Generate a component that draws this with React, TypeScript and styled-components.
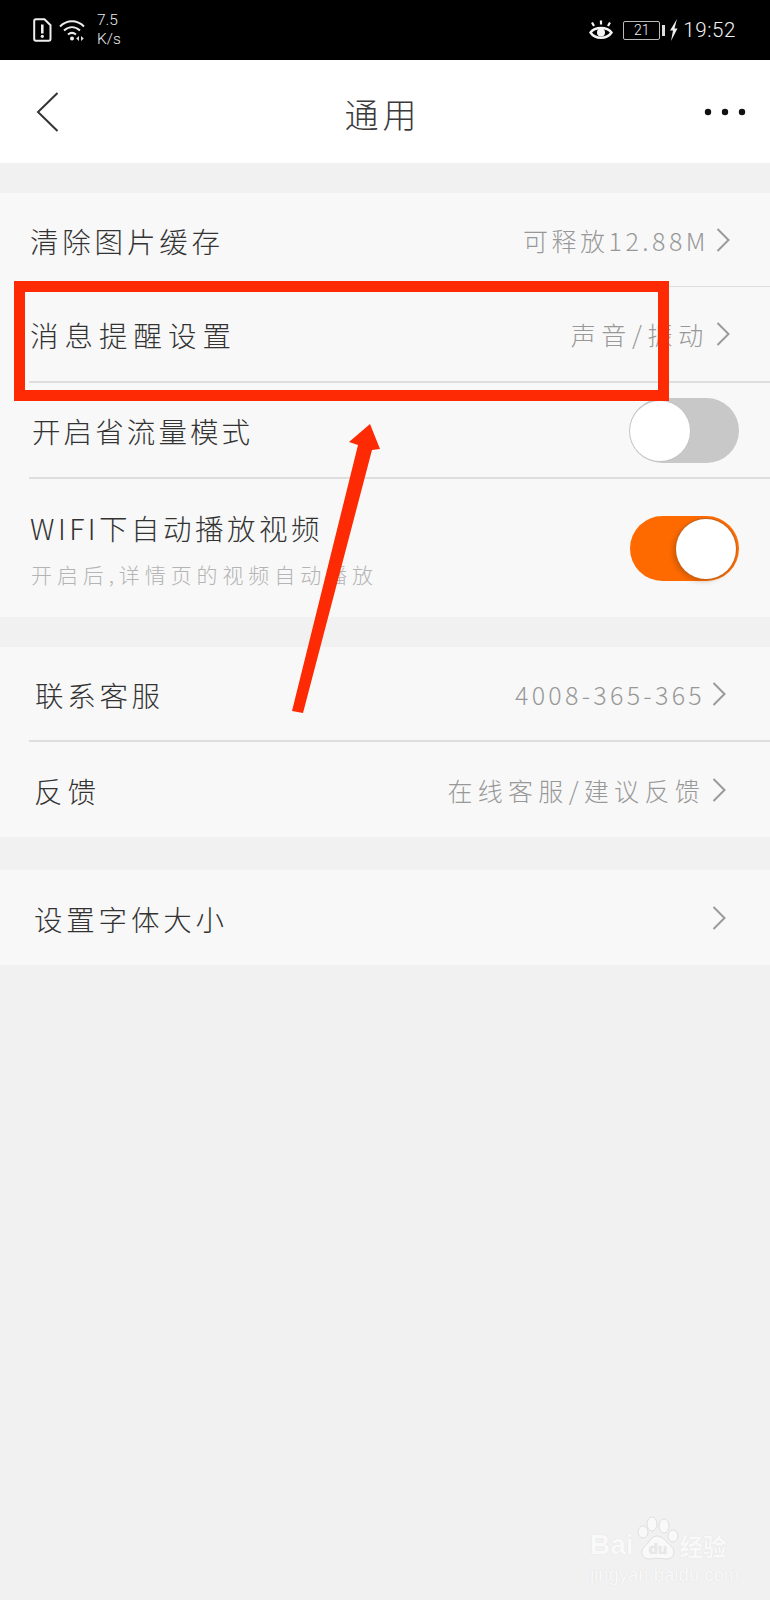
import React from "react";
import styled, { createGlobalStyle } from "styled-components";

const Global = createGlobalStyle`
  html, body { margin: 0; padding: 0; background: #f1f1f1; }
  * { box-sizing: border-box; }
`;

const CJK = `"Noto Sans CJK SC", "Noto Sans", sans-serif`;

const Page = styled.div`
  position: relative;
  width: 770px;
  height: 1600px;
  overflow: hidden;
  background: #f1f1f1;
  font-family: ${CJK};
`;

const StatusBar = styled.header`
  height: 60px;
  background: #000;
  color: #f2f2f2;
  display: flex;
  align-items: center;
  justify-content: space-between;
  padding: 0 34px 0 33px;
  font-family: Roboto, "Liberation Sans", sans-serif;
`;

const StatusGroup = styled.div`
  display: flex;
  align-items: center;
`;

const Speed = styled.div`
  margin-left: 9px;
  font-size: 15.5px;
  font-weight: 300;
  line-height: 19px;
  color: #ececec;
`;

const BatteryBox = styled.div`
  width: 37px;
  height: 19px;
  margin-left: 10px;
  border: 1px solid #bbb;
  border-radius: 2px;
  font-size: 14px;
  font-weight: 300;
  line-height: 16px;
  text-align: center;
`;

const BatteryTip = styled.div`
  width: 3px;
  height: 11px;
  margin-left: 2px;
  background: #ddd;
`;

const Clock = styled.div`
  margin-left: 5px;
  font-size: 20.5px;
  font-weight: 300;
  letter-spacing: 0.6px;
`;

const NavBar = styled.nav`
  height: 103px;
  background: #fff;
  display: flex;
  align-items: center;
  justify-content: space-between;
  padding: 0 24px 0 36px;
`;

const NavTitle = styled.h1`
  margin: 0 0 0 2px;
  padding-top: 4px;
  font-size: 34px;
  font-weight: 300;
  letter-spacing: 4px;
  color: #3a3a3a;
`;

const Group = styled.section<{ $top: number }>`
  margin-top: ${(p) => p.$top}px;
  background: #f8f8f8;
`;

const Row = styled.div<{ $height: number; $rule?: number }>`
  height: ${(p) => p.$height}px;
  margin-left: 29px;
  padding-right: 40px;
  display: flex;
  align-items: center;
  justify-content: space-between;
  border-bottom: ${(p) => (p.$rule ? `${p.$rule}px solid #dedede` : "none")};
`;

const SwitchRow = styled(Row)`
  padding-right: 31px;
`;

const Label = styled.div<{ $inset?: number; $spacing?: number }>`
  padding-left: ${(p) => p.$inset ?? 1}px;
  padding-top: 2px;
  font-size: 28.5px;
  font-weight: 300;
  line-height: 36px;
  letter-spacing: ${(p) => p.$spacing ?? 3.8}px;
  color: #333;
`;

const Sub = styled.div`
  padding-left: 2px;
  margin-top: 14px;
  font-size: 21px;
  font-weight: 300;
  line-height: 28px;
  letter-spacing: 4.9px;
  color: #b4b4b4;
`;

const Trailing = styled.div<{ $shift?: number }>`
  display: flex;
  align-items: center;
  margin-right: ${(p) => p.$shift ?? 0}px;
`;

const Value = styled.div<{ $spacing?: number }>`
  font-size: 25px;
  font-weight: 300;
  line-height: 34px;
  letter-spacing: ${(p) => p.$spacing ?? 3.5}px;
  color: #989898;
`;

const ChevronSlot = styled.svg`
  display: block;
  margin-left: 7px;
  flex: none;
`;

const Track = styled.div<{ $on?: boolean }>`
  position: relative;
  width: 109px;
  height: 65px;
  border-radius: 33px;
  background: ${(p) => (p.$on ? "#ff6a00" : "#c8c8c8")};
`;

const Knob = styled.div<{ $on?: boolean }>`
  position: absolute;
  top: 3px;
  left: ${(p) => (p.$on ? "46px" : "0")};
  width: 60px;
  height: 60px;
  border-radius: 50%;
  background: #fff;
  box-shadow: ${(p) =>
    p.$on ? "0 0 0 1px #c7641c, -3px 2px 5px rgba(120,60,0,.35)" : "0 0 0 1px #c4c4c4"};
`;

const Highlight = styled.div`
  position: absolute;
  left: 14px;
  top: 281px;
  width: 655px;
  height: 120px;
  border: 11px solid #fe2a03;
`;

const ArrowArt = styled.svg`
  position: absolute;
  left: 0;
  top: 0;
  pointer-events: none;
`;

const Watermark = styled.div`
  position: absolute;
  left: 590px;
  top: 1516px;
  width: 142px;
  color: #f9f9f9;
  text-shadow: 0 0 1px #d8d8d8;
`;

const MarkLine = styled.div`
  display: flex;
  align-items: flex-end;
  height: 46px;
`;

const MarkBrand = styled.span`
  font-family: "Liberation Sans", sans-serif;
  font-size: 28px;
  font-weight: 700;
  line-height: 34px;
`;

const MarkCn = styled.span`
  margin-left: 0;
  font-size: 23.5px;
  font-weight: 700;
  line-height: 32px;
`;

const MarkUrl = styled.div`
  font-family: "Liberation Sans", sans-serif;
  font-size: 18.5px;
  line-height: 22px;
  margin-top: 2px;
  white-space: nowrap;
`;

const Chevron = () => (
  <ChevronSlot width="14" height="24" viewBox="0 0 14 24" fill="none">
    <path d="M1.5 1 L12.5 12 L1.5 23" stroke="#9a9a9a" strokeWidth="2" />
  </ChevronSlot>
);

const Sim = () => (
  <svg width="19" height="24" viewBox="0 0 19 24" fill="none">
    <path d="M3 1.2h8.5l6 6V21a1.8 1.8 0 0 1-1.8 1.8H3A1.8 1.8 0 0 1 1.2 21V3A1.8 1.8 0 0 1 3 1.2z" stroke="#eee" strokeWidth="2" />
    <path d="M9.3 6.5v9" stroke="#eee" strokeWidth="2.6" />
    <circle cx="9.3" cy="18.3" r="1.6" fill="#eee" />
  </svg>
);

const Wifi = () => (
  <svg width="30" height="24" viewBox="0 0 28 24" fill="none" style={{ marginLeft: 6 }}>
    <path d="M1 8.5C8 1.5 18 1.5 25 8.5" stroke="#eee" strokeWidth="2" />
    <path d="M5 12.5C10 8 16 8 21 12.5" stroke="#eee" strokeWidth="2" />
    <path d="M9 16.5C11.5 14.5 14.5 14.5 17 16.5" stroke="#eee" strokeWidth="2" />
    <circle cx="13" cy="20.5" r="2" fill="#eee" />
    <path d="M20 18l-2.8 2.5 2.8 2.5zM22 18l2.8 2.5L22 23z" fill="#ddd" />
  </svg>
);

const Eye = () => (
  <svg width="24" height="21" viewBox="0 0 24 21" fill="none">
    <path d="M1.5 12.5C6 6.5 18 6.5 22.5 12.5C18 19.5 6 19.5 1.5 12.5z" stroke="#f4f4f4" strokeWidth="2.4" />
    <circle cx="12" cy="12.5" r="4" fill="#f4f4f4" />
    <path d="M5 6L3 2.5M12 4.5V.5M19 6l2-3.5" stroke="#f4f4f4" strokeWidth="2.2" />
  </svg>
);

const Bolt = () => (
  <svg width="9" height="22" viewBox="0 0 9 22" style={{ marginLeft: 4 }}>
    <path d="M8 0L1 11.5h3L2 22l6.5-12.5h-3z" fill="#eee" />
  </svg>
);

const Back = () => (
  <svg width="23" height="40" viewBox="0 0 23 40" fill="none">
    <path d="M21.5 1 L2 20 L21.5 39" stroke="#333" strokeWidth="2" />
  </svg>
);

const Dots = () => (
  <svg width="42" height="8" viewBox="0 0 42 8">
    <circle cx="4" cy="4" r="3.2" fill="#111" />
    <circle cx="21" cy="4" r="3.2" fill="#111" />
    <circle cx="38" cy="4" r="3.2" fill="#111" />
  </svg>
);

const Paw = () => (
  <svg width="42" height="46" viewBox="0 0 42 46" style={{ display: "block", flex: "none", margin: "0 1px 0 3px" }}>
    <g fill="#f9f9f9" stroke="#d8d8d8" strokeWidth="0.8">
      <ellipse cx="6" cy="16" rx="5" ry="6" />
      <ellipse cx="15" cy="8" rx="5" ry="7" />
      <ellipse cx="27" cy="10" rx="5" ry="7" />
      <ellipse cx="36" cy="20" rx="5" ry="6" />
      <path d="M20 20c6 0 9 6 14 10 6 6 2 14-6 13-4-1-10-1-15 0-8 1-11-8-5-13 5-4 6-10 12-10z" />
    </g>
    <text x="21" y="38" textAnchor="middle" fontFamily="Liberation Sans" fontSize="15" fontWeight="700" fill="#e8e8e8">du</text>
  </svg>
);

export default function App() {
  return (
    <Page>
      <Global />
      <StatusBar>
        <StatusGroup>
          <Sim />
          <Wifi />
          <Speed>7.5<br />K/s</Speed>
        </StatusGroup>
        <StatusGroup>
          <Eye />
          <BatteryBox>21</BatteryBox>
          <BatteryTip />
          <Bolt />
          <Clock>19:52</Clock>
        </StatusGroup>
      </StatusBar>
      <NavBar>
        <Back />
        <NavTitle>通用</NavTitle>
        <Dots />
      </NavBar>

      <Group $top={30}>
        <Row $height={94} $rule={1}>
          <Label $spacing={3.8}>清除图片缓存</Label>
          <Trailing>
            <Value>可释放12.88M</Value>
            <Chevron />
          </Trailing>
        </Row>
        <Row $height={96} $rule={2}>
          <Label $spacing={6}>消息提醒设置</Label>
          <Trailing>
            <Value $spacing={5.7}>声音/振动</Value>
            <Chevron />
          </Trailing>
        </Row>
        <SwitchRow $height={96} $rule={2}>
          <Label $inset={3} $spacing={3.1}>开启省流量模式</Label>
          <Track><Knob /></Track>
        </SwitchRow>
        <SwitchRow $height={138}>
          <div>
            <Label $spacing={3.5}>WIFI下自动播放视频</Label>
            <Sub>开启后,详情页的视频自动播放</Sub>
          </div>
          <Track $on><Knob $on /></Track>
        </SwitchRow>
      </Group>

      <Group $top={30}>
        <Row $height={95} $rule={2}>
          <Label $inset={6} $spacing={3.7}>联系客服</Label>
          <Trailing $shift={4}>
            <Value $spacing={3.3}>4008-365-365</Value>
            <Chevron />
          </Trailing>
        </Row>
        <Row $height={95}>
          <Label $inset={5} $spacing={5}>反馈</Label>
          <Trailing $shift={4}>
            <Value $spacing={5.3}>在线客服/建议反馈</Value>
            <Chevron />
          </Trailing>
        </Row>
      </Group>

      <Group $top={33}>
        <Row $height={95}>
          <Label $inset={5} $spacing={3.8}>设置字体大小</Label>
          <Trailing $shift={4}>
            <Chevron />
          </Trailing>
        </Row>
      </Group>

      <Highlight />
      <ArrowArt width="770" height="1600" viewBox="0 0 770 1600">
        <path d="M292 711 L358 445 L349 442 L370 424 L380 449 L372 450 L303 713 Z" fill="#fe2a03" />
      </ArrowArt>
      <Watermark>
        <MarkLine>
          <MarkBrand>Bai</MarkBrand>
          <Paw />
          <MarkCn>经验</MarkCn>
        </MarkLine>
        <MarkUrl>jingyan.baidu.com</MarkUrl>
      </Watermark>
    </Page>
  );
}
